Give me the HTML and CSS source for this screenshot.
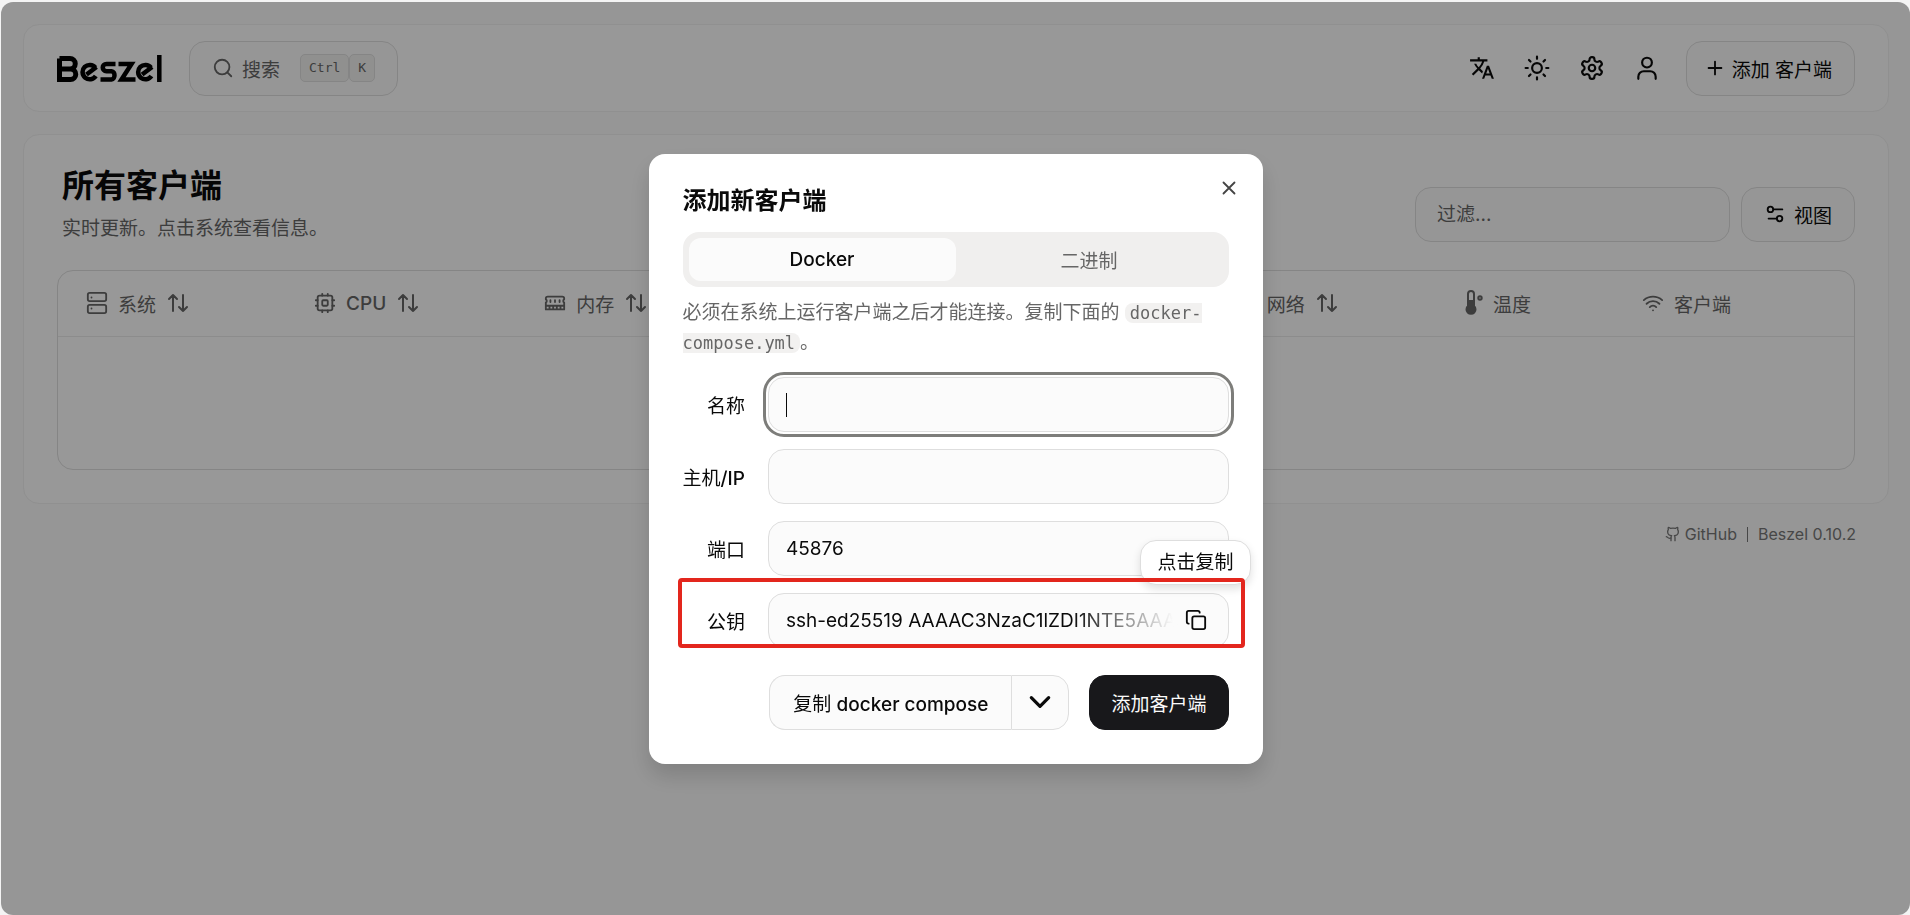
FILE: index.html
```html
<!DOCTYPE html>
<html lang="zh-CN">
<head>
  <meta charset="UTF-8" />
  <title>Beszel</title>
  <link rel="stylesheet" href="styles.css">
</head>
<body>
  <!-- shared icons -->
  <svg class="sprite" aria-hidden="true">
    <symbol id="i-sort" viewBox="0 0 24 24"><path d="m3 8 4-4 4 4M7 4v16M21 16l-4 4-4-4M17 20V4" /></symbol>
  </svg>

  <div class="page">
    <header class="navbar">
      <a class="logo" href="#" aria-label="Beszel">
        <svg viewBox="0 0 105 27" fill="none" stroke="#000" stroke-width="4.500">
          <path d="M2.500 3.500H13a4.600 4.600 0 0 1 0 10.500H3M13.500 14a5 5 0 0 1 0 10.500H2.500V3.500" stroke-width="5" />
          <path d="M38.400 12.600A7.200 7.200 0 1 0 38.800 21M39.500 12 29.500 19.500" />
          <path d="M58.500 9H49.500c-5 0-5 7 0 7.200h5c4 .3 4 8 0 8.300H43.500" />
          <path d="M61.500 9H74.500L64.500 24.500H78.500" />
          <path d="M94 12.600A7.200 7.200 0 1 0 94.400 21M95.100 12 85.100 19.500" />
          <path d="M102.300 0v27" />
        </svg>
      </a>
      <button class="btn search">
        <svg class="icon" viewBox="0 0 24 24"><circle cx="11" cy="11" r="8" /><path d="m21 21-4.300-4.300" /></svg>
        <span>搜索</span>
        <span class="keys"><kbd>Ctrl</kbd><kbd>K</kbd></span>
      </button>
      <nav class="actions">
        <button class="icon-btn" aria-label="语言">
          <svg class="icon solid" viewBox="0 0 24 24"><path d="M12.870 15.070l-2.540-2.510.03-.03A17.500 17.500 0 0 0 14.070 6H17V4h-7V2H8v2H1v1.990h11.170C11.500 7.920 10.440 9.750 9 11.350 8.070 10.320 7.300 9.190 6.690 8h-2c.73 1.630 1.730 3.170 2.980 4.560l-5.090 5.020L4 19l5-5 3.110 3.110.76-2.040zM18.500 10h-2L12 22h2l1.120-3h4.750L21 22h2l-4.500-12zm-2.620 7l1.620-4.330L19.120 17h-3.240z" /></svg>
        </button>
        <button class="icon-btn" aria-label="主题">
          <svg class="icon" viewBox="0 0 24 24"><circle cx="12" cy="12" r="4.500" /><path d="M12 1.500v2M12 20.500v2M4.600 4.600l1.400 1.400M18 18l1.400 1.400M1.500 12h2M20.500 12h2M6 18l-1.400 1.400M19.400 4.600 18 6" /></svg>
        </button>
        <button class="icon-btn" aria-label="设置">
          <svg class="icon" viewBox="0 0 24 24"><path d="M12.220 2h-.44a2 2 0 0 0-2 2v.18a2 2 0 0 1-1 1.730l-.43.25a2 2 0 0 1-2 0l-.15-.08a2 2 0 0 0-2.730.73l-.22.38a2 2 0 0 0 .73 2.730l.15.1a2 2 0 0 1 1 1.720v.51a2 2 0 0 1-1 1.740l-.15.09a2 2 0 0 0-.73 2.730l.22.38a2 2 0 0 0 2.730.73l.15-.08a2 2 0 0 1 2 0l.43.25a2 2 0 0 1 1 1.730V20a2 2 0 0 0 2 2h.44a2 2 0 0 0 2-2v-.18a2 2 0 0 1 1-1.730l.43-.25a2 2 0 0 1 2 0l.15.08a2 2 0 0 0 2.730-.73l.22-.39a2 2 0 0 0-.73-2.730l-.15-.08a2 2 0 0 1-1-1.740v-.5a2 2 0 0 1 1-1.740l.15-.09a2 2 0 0 0 .73-2.730l-.22-.38a2 2 0 0 0-2.730-.73l-.15.08a2 2 0 0 1-2 0l-.43-.25a2 2 0 0 1-1-1.730V4a2 2 0 0 0-2-2z" /><circle cx="12" cy="12" r="3" /></svg>
        </button>
        <button class="icon-btn" aria-label="用户">
          <svg class="icon" viewBox="0 0 24 24"><circle cx="12" cy="7" r="4.500" /><path d="M20 22v-2a5 5 0 0 0-5-5H9a5 5 0 0 0-5 5v2" /></svg>
        </button>
        <button class="btn add">
          <svg class="icon" viewBox="0 0 24 24"><path d="M5 12h14M12 5v14" /></svg>
          <span>添加 客户端</span>
        </button>
      </nav>
    </header>

    <main class="card">
      <div class="card-head">
        <div>
          <h1>所有客户端</h1>
          <p>实时更新。点击系统查看信息。</p>
        </div>
        <div class="tools">
          <input class="field" type="text" placeholder="过滤..." aria-label="过滤" />
          <button class="btn view">
            <svg class="icon" viewBox="0 0 24 24"><path d="M20 7h-9M14 17H5" /><circle cx="17" cy="17" r="3" /><circle cx="7" cy="7" r="3" /></svg>
            <span>视图</span>
          </button>
        </div>
      </div>

      <div class="table-wrap">
        <table>
          <thead>
            <tr>
              <th class="system"><span class="th">
                <svg class="icon" viewBox="0 0 24 24"><rect x="2" y="1" width="20" height="9" rx="2" /><rect x="2" y="14" width="20" height="9" rx="2" /><path d="M6 6h.01M6 18h.01" /></svg>
                系统 <svg class="icon sort"><use href="#i-sort" /></svg></span></th>
              <th><span class="th">
                <svg class="icon" viewBox="0 0 24 24"><rect x="4" y="4" width="16" height="16" rx="2" /><rect x="9" y="9" width="6" height="6" rx="1" /><path d="M15 2v2M15 20v2M2 15h2M2 9h2M20 15h2M20 9h2M9 2v2M9 20v2" /></svg>
                <span class="medium">CPU</span> <svg class="icon sort"><use href="#i-sort" /></svg></span></th>
              <th><span class="th">
                <svg class="icon" viewBox="0 0 24 24"><path d="M7 9v2M12 9v2M17 9v2M2 15h20M6 15v4M10 15v4M14 15v4M18 15v4M4 5h16a2 2 0 0 1 2 2v1a2 2 0 0 0 0 3.500V19H2v-7.500A2 2 0 0 0 2 8V7a2 2 0 0 1 2-2z" /></svg>
                内存 <svg class="icon sort"><use href="#i-sort" /></svg></span></th>
              <td></td>
              <td></td>
              <th><span class="th">
                <svg class="icon" viewBox="0 0 24 24"><rect x="9" y="2" width="6" height="6" rx="1" /><rect x="2" y="16" width="6" height="6" rx="1" /><rect x="16" y="16" width="6" height="6" rx="1" /><path d="M5 16v-4h14v4M12 12V8" /></svg>
                网络 <svg class="icon sort"><use href="#i-sort" /></svg></span></th>
              <th class="temp"><span class="th">
                <svg class="icon thermo" viewBox="0 0 18 26"><path d="M3 15V4a3 3 0 0 1 6 0v11" /><path class="solid" d="M3 11h6v5a4.500 4.500 0 1 1-6 0z" /><circle cx="15" cy="8" r="1.700" /></svg>
                温度</span></th>
              <th class="agent"><span class="th">
                <svg class="icon" viewBox="0 0 24 24"><path d="M12 20h.01M2 8.800a15 15 0 0 1 20 0M5 12.800a10 10 0 0 1 14 0M8.500 16.400a5 5 0 0 1 7 0" /></svg>
                客户端</span></th>
            </tr>
          </thead>
          <tbody>
            <tr><td colspan="8"></td></tr>
          </tbody>
        </table>
      </div>
    </main>

    <footer class="footer">
      <a href="#">
        <svg class="icon" viewBox="0 0 24 24"><path d="M15 22v-4a4.800 4.800 0 0 0-1-3.500c3 0 6-2 6-5.500.08-1.250-.27-2.480-1-3.500.28-1.150.28-2.350 0-3.500 0 0-1 0-3 1.500-2.640-.5-5.360-.5-8 0C6 2 5 2 5 2c-.3 1.150-.3 2.350 0 3.500A5.400 5.400 0 0 0 4 9c0 3.500 3 5.500 6 5.500-.39.49-.68 1.050-.85 1.650-.17.6-.22 1.230-.15 1.850v4" /><path d="M9 18c-4.510 2-5-2-7-2" /></svg>
        GitHub
      </a>
      <span class="bar"></span>
      <a href="#">Beszel 0.10.2</a>
    </footer>
  </div>

  <div class="overlay">
    <section class="dialog" role="dialog" aria-labelledby="dialog-title">
      <button class="close" aria-label="关闭">
        <svg class="icon" viewBox="0 0 24 24"><path d="M18 6 6 18M6 6l12 12" /></svg>
      </button>
      <h2 id="dialog-title">添加新客户端</h2>

      <div class="tabs" role="tablist">
        <button class="tab active" role="tab">Docker</button>
        <button class="tab" role="tab">二进制</button>
      </div>

      <p class="hint">必须在系统上运行客户端之后才能连接。复制下面的 <code>docker-compose.yml</code>。</p>

      <form class="form">
        <label for="name">名称</label>
        <div class="name">
          <input class="field" id="name" type="text" autofocus />
        </div>
        <label for="host">主机<span class="medium">/IP</span></label>
        <input class="field" id="host" type="text" />
        <label for="port">端口</label>
        <input class="field" id="port" type="text" value="45876" />
        <label for="pkey">公钥</label>
        <div class="key">
          <input class="field" id="pkey" type="text" readonly value="ssh-ed25519 AAAAC3NzaC1lZDI1NTE5AAAAI" />
          <button class="copy" type="button" aria-label="复制">
            <svg class="icon" viewBox="0 0 24 24"><rect x="8" y="8" width="14" height="14" rx="2" /><path d="M4 16c-1.100 0-2-.9-2-2V4c0-1.100.9-2 2-2h10c1.100 0 2 .9 2 2" /></svg>
          </button>
          <div class="tooltip" role="tooltip">点击复制</div>
          <div class="marker"></div>
        </div>
      </form>

      <div class="buttons">
        <div class="split">
          <button class="btn"><span>复制 <span class="medium">docker compose</span></span></button>
          <button class="btn more" aria-label="更多">
            <svg class="icon" viewBox="0 0 24 24"><path d="m4 8 8 8 8-8" /></svg>
          </button>
        </div>
        <button class="btn primary">添加客户端</button>
      </div>
    </section>
  </div>
</body>
</html>
```

FILE: styles.css
```css
* {
  box-sizing: border-box;
}

body {
  margin: 0;
  min-height: 100vh;
  padding: 2px 0 0 1px;
  display: flex;
  background-color: #f4f4f4;
  font-family: Inter, "Noto Sans CJK SC", sans-serif;
  font-size: 19px;
  color: #0a0a0a;
}

button,
input {
  font: inherit;
  color: inherit;
}

button {
  border: none;
  background: none;
  padding: 0;
  cursor: pointer;
}

a {
  color: inherit;
  text-decoration: none;
}

.medium {
  font-weight: 500;
}

.sprite {
  position: absolute;
  width: 0;
  height: 0;
}

.icon {
  width: 22px;
  height: 22px;
  flex: none;
  fill: none;
  stroke: currentColor;
  stroke-width: 2;
  stroke-linecap: round;
  stroke-linejoin: round;
}

.icon.solid {
  fill: currentColor;
  stroke: none;
}

.page {
  flex: 1;
  padding: 22px 21px 0 22px;
  border-radius: 12px;
  background-color: #fafafa;
}

/* top bar */
.navbar {
  display: flex;
  align-items: center;
  height: 88px;
  padding: 0 33px;
  border: 1px solid #f0f0f0;
  border-radius: 16px;
  background-color: #fdfdfd;
}

.logo svg {
  display: block;
  width: 105px;
  height: 27px;
}

.btn {
  display: flex;
  align-items: center;
  justify-content: center;
  gap: 8px;
  height: 55px;
  padding: 0 22px;
  border: 1px solid #dedede;
  border-radius: 16px;
  background-color: #fbfbfb;
  white-space: nowrap;
}

.search {
  margin-left: 27px;
  color: #666666;
}

.keys {
  display: flex;
  margin-left: 12px;
}

kbd {
  padding: 0 8px;
  border: 1px solid #dedede;
  border-radius: 5px;
  background-color: #f0f0ef;
  font: 13px/26px "DejaVu Sans Mono", monospace;
}

.actions {
  display: flex;
  align-items: center;
  margin-left: auto;
}

.icon-btn {
  display: flex;
  align-items: center;
  justify-content: center;
  width: 55px;
  height: 55px;
}

.icon-btn .icon {
  width: 26px;
  height: 26px;
}

.add {
  margin-left: 11px;
  padding: 0 22px 0 17px;
  gap: 6px;
}

/* systems list */
.card {
  margin-top: 22px;
  padding: 32px 33px 33px;
  border: 1px solid #f0f0f0;
  border-radius: 16px;
  background-color: #fdfdfd;
}

.card-head {
  display: flex;
  align-items: center;
  justify-content: space-between;
  height: 76px;
  margin-bottom: 27px;
}

.card-head > div:first-child {
  padding-left: 5px;
}

h1 {
  margin: 0 0 10px;
  font-size: 32px;
  line-height: 38px;
}

.card-head p {
  margin: 0;
  line-height: 28px;
  color: #666666;
}

.tools {
  display: flex;
  gap: 11px;
  padding-top: 18px;
}

.view {
  padding: 0 22px;
}

.field {
  width: 100%;
  height: 55px;
  padding: 0 17px;
  border: 1px solid #dedede;
  border-radius: 16px;
  background-color: #fbfbfb;
}

.field::placeholder {
  color: #666666;
}

.tools .field {
  width: 315px;
  padding: 0 21px;
}

.table-wrap {
  border: 1px solid #dedede;
  border-radius: 16px;
  overflow: hidden;
}

table {
  width: 100%;
  table-layout: fixed;
  border-collapse: collapse;
}

th {
  height: 65px;
  padding: 0 0 0 28px;
  border-bottom: 1px solid #eaeaea;
  font-weight: 400;
  text-align: left;
  color: #666666;
}

thead td {
  border-bottom: 1px solid #eaeaea;
}

.th {
  display: flex;
  align-items: center;
  gap: 10px;
}

.th .sort {
  width: 24px;
  height: 24px;
}

.system {
  width: 228px;
}

.temp {
  width: 177px;
}

.agent {
  width: 240px;
}

.icon.thermo {
  width: 18px;
  height: 26px;
}

.thermo .solid {
  fill: currentColor;
}

tbody td {
  height: 133px;
}

.footer {
  display: flex;
  align-items: center;
  justify-content: flex-end;
  gap: 10px;
  margin-top: 17px;
  padding-right: 33px;
  font-size: 16px;
  line-height: 26px;
  color: #777777;
}

.footer a {
  display: flex;
  align-items: center;
  gap: 4px;
}

.footer .icon {
  width: 16px;
  height: 16px;
}

.bar {
  width: 1px;
  height: 15px;
  background-color: #777777;
}

/* dialog */
.overlay {
  position: fixed;
  inset: 2px 0 0 1px;
  display: flex;
  align-items: center;
  justify-content: center;
  border-radius: 12px;
  background-color: rgba(0, 0, 0, 0.4);
}

.dialog {
  position: relative;
  width: 614px;
  padding: 33px 34px 34px;
  border-radius: 16px;
  background-color: #ffffff;
  box-shadow: 0 12px 22px rgba(0, 0, 0, 0.15);
}

.close {
  position: absolute;
  top: 23px;
  right: 23px;
  color: #444444;
}

.close .icon {
  display: block;
}

h2 {
  margin: 0 0 17px;
  font-size: 24px;
  line-height: 28px;
}

.tabs {
  display: flex;
  height: 55px;
  padding: 6px;
  border-radius: 16px;
  background-color: #f0efee;
}

.tab {
  flex: 1;
  border-radius: 12px;
  color: #666666;
}

.tab.active {
  background-color: #fbfbfb;
  font-weight: 500;
  color: #0a0a0a;
}

.hint {
  margin: 11px 0 19px;
  line-height: 30px;
  color: #666666;
}

code {
  padding: 0 5px;
  border-radius: 8px;
  background-color: #f2f1f0;
  font: 17px "DejaVu Sans Mono", monospace;
}

.form {
  display: grid;
  grid-template-columns: auto 1fr;
  align-items: center;
  gap: 17px 23px;
}

.form label {
  text-align: right;
}

.name {
  position: relative;
}

#name {
  caret-color: transparent;
}

#name:focus {
  outline: 3px solid #7d7d7a;
  outline-offset: 2px;
}

/* text cursor */
.name:focus-within::after {
  content: "";
  position: absolute;
  top: 16px;
  left: 18px;
  width: 1px;
  height: 24px;
  background-color: #0a0a0a;
}

.key {
  position: relative;
  border-radius: 16px;
  background-color: #fbfbfb;
}

#pkey {
  padding-right: 58px;
  color: transparent;
  background-color: transparent;
  background-image: linear-gradient(to right, #0a0a0a 66%, #fbfbfb 88%);
  background-clip: text;
}

.copy {
  position: absolute;
  top: 16px;
  right: 22px;
}

.copy .icon {
  display: block;
}

.tooltip {
  position: absolute;
  right: -22px;
  bottom: 63px;
  padding: 0 16px;
  border: 1px solid #dedede;
  border-radius: 16px;
  background-color: #ffffff;
  line-height: 43px;
  white-space: nowrap;
  box-shadow: 0 4px 8px rgba(0, 0, 0, 0.12);
}

/* red frame round the public key row */
.marker {
  position: absolute;
  inset: -15px -16px 0 -90px;
  border: 4px solid #e3261d;
  border-radius: 4px;
  pointer-events: none;
}

.buttons {
  display: flex;
  justify-content: flex-end;
  gap: 20px;
  margin-top: 27px;
}

.split {
  display: flex;
}

.split .btn:first-child {
  padding: 0 23px;
  border-right: none;
  border-radius: 16px 0 0 16px;
}

.split .more {
  width: 58px;
  padding: 0;
  border-radius: 0 16px 16px 0;
}

.more .icon {
  width: 26px;
  height: 26px;
  stroke-width: 3;
}

.btn.primary {
  padding: 0 21px;
  border-color: #18181b;
  background-color: #18181b;
  color: #fafafa;
}
```
